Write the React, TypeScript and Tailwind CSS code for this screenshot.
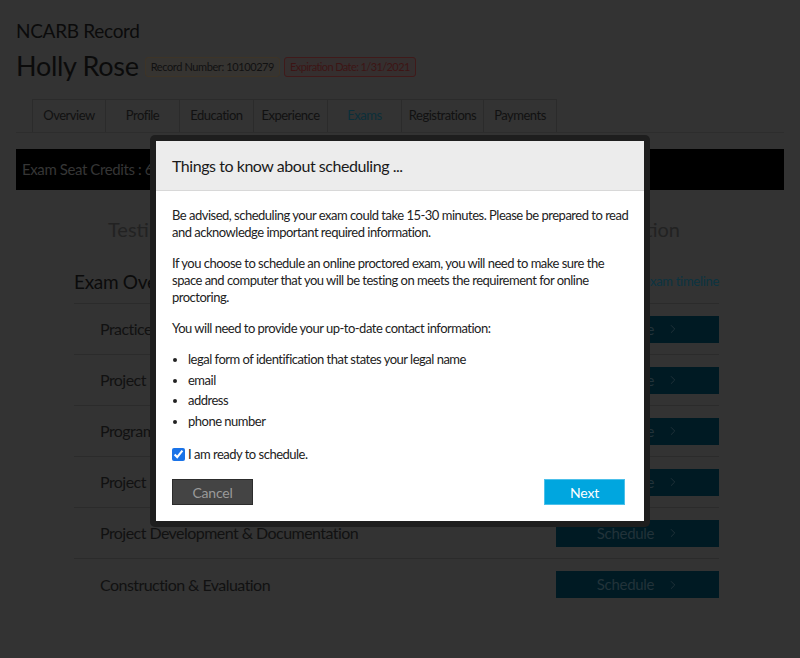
import React, { useState } from 'react';
import { ChevronRight } from 'lucide-react';

const tabs = [
  { label: 'Overview', w: 'w-[73px]' },
  { label: 'Profile', w: 'w-[74px]' },
  { label: 'Education', w: 'w-[74px]' },
  { label: 'Experience', w: 'w-[74px]' },
  { label: 'Exams', w: 'w-[74px]', active: true },
  { label: 'Registrations', w: 'w-[82px]' },
  { label: 'Payments', w: 'w-[74px]' },
];

const exams = [
  'Practice Management',
  'Project Management',
  'Programming & Analysis',
  'Project Planning & Design',
  'Project Development & Documentation',
  'Construction & Evaluation',
];

const requirements = [
  'legal form of identification that states your legal name',
  'email',
  'address',
  'phone number',
];

const SchedulingModal: React.FC = () => {
  const [ready, setReady] = useState(true);

  return (
    <div className="fixed inset-0 pt-[4px] flex items-center justify-center">
      <div className="w-[500px] rounded-[5px] bg-[#1e1e1e] p-[6px]">
        <div className="bg-white">
          <div className="h-[50px] bg-[#ececec] border-b border-[#d8d8d8] px-4 flex items-center">
            <h2 className="text-[16px] text-[#1a1a1a] tracking-[-0.45px]">Things to know about scheduling ...</h2>
          </div>
          <div className="pl-4 pr-[12px] pt-[16px] pb-[16px] text-[13px] leading-[17px] text-[#222] tracking-[-0.5px]">
            <p>
              Be advised, scheduling your exam could take 15-30 minutes. Please be prepared to read and
              acknowledge important required information.
            </p>
            <p className="mt-[14px]">
              If you choose to schedule an online proctored exam, you will need to make sure the space and
              computer that you will be testing on meets the requirement for online proctoring.
            </p>
            <p className="mt-[14px]">You will need to provide your up-to-date contact information:</p>
            <ul className="mt-[12px] list-disc pl-4">
              {requirements.map((r) => (
                <li key={r} className="leading-[20.5px]">
                  {r}
                </li>
              ))}
            </ul>
            <label className="mt-[15px] flex items-center gap-[3px]">
              <input
                type="checkbox"
                checked={ready}
                onChange={() => setReady(!ready)}
                className="h-[13px] w-[13px] m-0 accent-[#1a73e8]"
              />
              <span>I am ready to schedule.</span>
            </label>
            <div className="mt-[16px] flex items-center justify-between">
              <button className="w-[81px] h-[26px] bg-[#444] border border-[#2c2c2c] text-[#9a9a9a] text-[14px] tracking-[-0.2px]">
                Cancel
              </button>
              <button className="mr-[7px] w-[81px] h-[26px] bg-[#00a6df] border border-[#4cc0ea] text-white text-[14px] tracking-[-0.2px]">
                Next
              </button>
            </div>
          </div>
        </div>
      </div>
    </div>
  );
};

export default function App() {
  return (
    <div className="relative min-h-[658px] bg-[#333333] font-['Lato',sans-serif] overflow-hidden">
      <div className="px-4 pt-[19px]">
        <h1 className="text-[19px] leading-[24px] text-[#0b0b0b] tracking-[-0.3px]">NCARB Record</h1>
        <div className="mt-[5px] h-[36px] flex items-center gap-[4px]">
          <span className="text-[27px] leading-[36px] text-[#0b0b0b] mr-[2px] tracking-[-0.3px]">Holly Rose</span>
          <span className="mt-[2px] h-[20px] px-[5px] flex items-center rounded-[3px] border border-[#3d3427] bg-[#363431] text-[11px] text-[#111] tracking-[-0.4px]">
            Record Number: 10100279
          </span>
          <span className="mt-[2px] h-[20px] px-[5px] flex items-center rounded-[3px] border border-[#401a1a] bg-[#352f2f] text-[11px] text-[#3d1515] tracking-[-0.6px]">
            Expiration Date: 1/31/2021
          </span>
        </div>

        <div className="mt-[15px] border-b border-[#2d2d2d] pl-4 flex">
          {tabs.map((t) => (
            <div
              key={t.label}
              className={`${t.w} h-[33px] flex items-center justify-center border-t border-l border-[#2b2b2b] last:border-r text-[13px] tracking-[-0.5px] ${
                t.active ? 'text-[#0b2f3a]' : 'text-[#111]'
              }`}
            >
              {t.label}
            </div>
          ))}
        </div>

        <div className="mt-[16px] h-[41px] bg-black flex items-center px-[6px] text-[15px] tracking-[-0.4px] text-[#363636]">
          Exam Seat Credits : 6
        </div>

        <div className="mt-[27px] flex justify-between pl-[92px] pr-[104px] text-[20px] leading-[24px] text-[#222]">
          <span>Testing Guidelines</span>
          <span>Exam Preparation</span>
        </div>

        <div className="ml-[58px] mr-[65px] mt-[29px]">
          <div className="flex items-center justify-between pb-[9px] border-b border-[#2b2b2b]">
            <span className="text-[19px] leading-[24px] text-[#0b0b0b] tracking-[-0.3px]">Exam Overview</span>
            <span className="text-[13px] text-[#0b3441] tracking-[-0.3px]">View exam timeline</span>
          </div>
          {exams.map((e, i) => (
            <div
              key={e}
              className={`h-[51px] flex items-center justify-between pl-[26px] ${
                i < exams.length - 1 ? 'border-b border-[#2b2b2b]' : ''
              }`}
            >
              <span className="text-[16px] text-[#111] tracking-[-0.55px]">{e}</span>
              <button className="w-[163px] h-[27px] bg-[#001a23] flex items-center justify-center gap-[12px] pl-[2px] text-[15px] tracking-[-0.3px] text-[#22333a]">
                Schedule
                <ChevronRight size={14} strokeWidth={1.5} />
              </button>
            </div>
          ))}
        </div>
      </div>

      <SchedulingModal />
    </div>
  );
}
